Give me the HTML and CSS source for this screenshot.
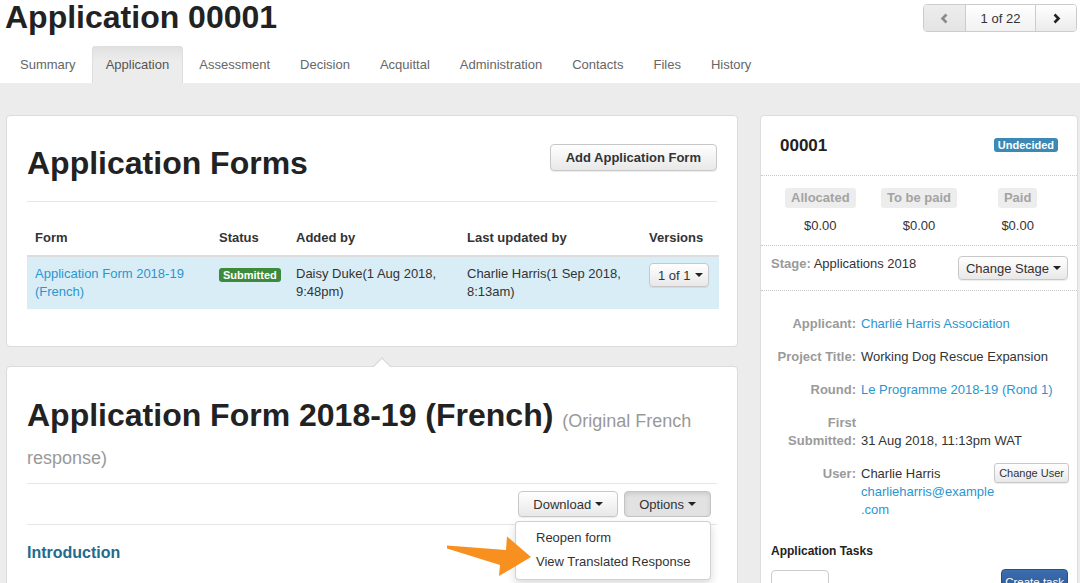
FILE: index.html
```html
<!DOCTYPE html>
<html lang="en">
<head>
<meta charset="utf-8">
<title>Application 00001</title>
<link rel="stylesheet" href="styles.css">
</head>
<body>
<header class="top">
  <div class="title-row">
    <h1 class="page-title">Application 00001</h1>
    <div class="pager">
      <span class="pg-btn pg-prev"><svg width="9" height="11" viewBox="0 0 9 11"><polyline points="6.5,1.5 2.5,5.5 6.5,9.5" fill="none" stroke="#8a8a8a" stroke-width="2.6"/></svg></span>
      <span class="pg-btn pg-mid">1 of 22</span>
      <span class="pg-btn pg-next"><svg width="9" height="11" viewBox="0 0 9 11"><polyline points="2.5,1.5 6.5,5.5 2.5,9.5" fill="none" stroke="#222" stroke-width="2.6"/></svg></span>
    </div>
  </div>
  <nav class="tabs">
    <a class="tab">Summary</a>
    <a class="tab active">Application</a>
    <a class="tab">Assessment</a>
    <a class="tab">Decision</a>
    <a class="tab">Acquittal</a>
    <a class="tab">Administration</a>
    <a class="tab">Contacts</a>
    <a class="tab">Files</a>
    <a class="tab">History</a>
  </nav>
</header>

<main class="main">
  <div class="col-left">
    <section class="card forms-card">
      <div class="card-head">
        <h2 class="big-title">Application Forms</h2>
        <button class="btn btn-bold">Add Application Form</button>
      </div>
      <table class="forms-table">
        <colgroup>
          <col class="w-form"><col class="w-status"><col class="w-added"><col class="w-updated"><col class="w-versions">
        </colgroup>
        <thead>
          <tr><th>Form</th><th>Status</th><th>Added by</th><th>Last updated by</th><th>Versions</th></tr>
        </thead>
        <tbody>
          <tr class="row-info">
            <td><a class="link">Application Form 2018-19 (French)</a></td>
            <td><span class="badge badge-green">Submitted</span></td>
            <td>Daisy Duke(1 Aug 2018, 9:48pm)</td>
            <td>Charlie Harris(1 Sep 2018, 8:13am)</td>
            <td><button class="btn btn-ver">1 of 1 <span class="caret"></span></button></td>
          </tr>
        </tbody>
      </table>
    </section>

    <section class="card form-card">
      <h2 class="big-title form-title">Application Form 2018-19 (French) <small class="sub">(Original French response)</small></h2>
      <div class="actions">
        <button class="btn">Download <span class="caret"></span></button>
        <div class="dropdown">
          <button class="btn btn-active">Options <span class="caret"></span></button>
          <ul class="menu">
            <li>Reopen form</li>
            <li>View Translated Response</li>
          </ul>
        </div>
      </div>
      <h3 class="section-title">Introduction</h3>
      <svg class="arrow" width="100" height="50" viewBox="440 530 100 50">
        <polygon points="447,545.5 506,550 507,536.5 531,557 499,576 500,565 447,548.5" fill="#f7901e"/>
      </svg>
    </section>
  </div>

  <aside class="card side">
    <div class="side-head">
      <span class="app-no">00001</span>
      <span class="badge badge-blue">Undecided</span>
    </div>
    <div class="stats">
      <div class="stat"><span class="stat-label">Allocated</span><span class="stat-val">$0.00</span></div>
      <div class="stat"><span class="stat-label">To be paid</span><span class="stat-val">$0.00</span></div>
      <div class="stat"><span class="stat-label">Paid</span><span class="stat-val">$0.00</span></div>
    </div>
    <div class="stage">
      <div class="stage-text"><span class="muted-b">Stage:</span> Applications 2018</div>
      <button class="btn btn-sm">Change Stage <span class="caret"></span></button>
    </div>
    <dl class="details">
      <div class="drow"><dt>Applicant:</dt><dd><a class="link">Charlié Harris Association</a></dd></div>
      <div class="drow"><dt>Project Title:</dt><dd>Working Dog Rescue Expansion</dd></div>
      <div class="drow"><dt>Round:</dt><dd><a class="link">Le Programme 2018-19 (Rond 1)</a></dd></div>
      <div class="drow drow-low"><dt>First Submitted:</dt><dd>31 Aug 2018, 11:13pm WAT</dd></div>
      <div class="drow"><dt>User:</dt>
        <dd class="user-dd">
          <div class="user-text">Charlie Harris<br><a class="link">charlieharris@example<wbr>.com</a></div>
          <button class="btn btn-xs">Change User</button>
        </dd>
      </div>
    </dl>
    <h4 class="tasks-title">Application Tasks</h4>
    <div class="tasks-row">
      <span class="task-input"></span>
      <button class="btn btn-primary">Create task</button>
    </div>
  </aside>
</main>
</body>
</html>
```

FILE: styles.css
```css
* { box-sizing: border-box; }

body {
  margin: 0;
  font-family: "Liberation Sans", Arial, sans-serif;
  font-size: 13px;
  color: #333;
  background: #ececec;
  overflow: hidden;
}

/* ---------- header ---------- */
.top {
  background: #fff;
}
.title-row {
  height: 46px;
  display: flex;
  justify-content: space-between;
  align-items: flex-start;
}
.page-title {
  margin: 0;
  padding-left: 5px;
  font-size: 32px;
  line-height: 35px;
  font-weight: bold;
  color: #222;
}
.pager {
  margin: 4px 3px 0 0;
  display: flex;
  height: 28px;
  border: 1px solid #ccc;
  border-radius: 4px;
  overflow: hidden;
}
.pg-btn {
  display: flex;
  align-items: center;
  justify-content: center;
  height: 100%;
}
.pg-prev {
  width: 42px;
  background: linear-gradient(#ededed, #e4e4e4);
  border-right: 1px solid #ccc;
}
.pg-mid {
  width: 70px;
  background: linear-gradient(#fff, #f1f1f1);
  border-right: 1px solid #ccc;
  color: #333;
}
.pg-next {
  width: 40px;
  background: linear-gradient(#fff, #ebebeb);
}

.tabs {
  display: flex;
  height: 37px;
  padding-left: 6px;
}
.tab {
  display: block;
  padding: 0 14px;
  margin-right: 2px;
  line-height: 37px;
  color: #666;
  border-radius: 4px 4px 0 0;
}
.tab.active {
  color: #555;
  background: linear-gradient(#e0e0e0, #ececec 40%);
  box-shadow: inset 1px 1px 0 #dedede, inset -1px 0 0 #dedede;
}

/* ---------- layout ---------- */
.main {
  display: flex;
  gap: 22px;
  padding: 32px 2px 0 6px;
  align-items: flex-start;
}
.col-left {
  width: 732px;
  display: flex;
  flex-direction: column;
  gap: 19px;
}
.card {
  background: #fff;
  border: 1px solid #dcdcdc;
  border-radius: 4px;
}

/* ---------- buttons ---------- */
.btn {
  font-family: "Liberation Sans", Arial, sans-serif;
  font-size: 13px;
  color: #333;
  height: 26px;
  padding: 0 14px;
  display: inline-flex;
  align-items: center;
  background: linear-gradient(#fff, #e8e8e8);
  border: 1px solid #c8c8c8;
  border-radius: 4px;
  box-shadow: 0 1px 1px rgba(0,0,0,.075);
  white-space: nowrap;
  cursor: pointer;
}
.btn-bold { font-weight: bold; height: 27px; padding: 0 15px; }
.btn-active {
  background: #e2e2e2;
  box-shadow: inset 0 2px 4px rgba(0,0,0,.1);
  border-color: #c4c4c4;
}
.btn-ver { height: 24px; padding: 0 5px 0 8px; }
.btn-sm { height: 24px; padding: 0 6px 0 7px; }
.btn-xs { height: 20px; padding: 0 4px; font-size: 11px; border-radius: 3px; }
.btn-primary {
  color: #fff;
  font-size: 11.5px;
  height: 26px;
  padding: 0 3px;
  background: linear-gradient(#3b6eb0, #2a5591);
  border-color: #284f86;
}
.caret {
  display: inline-block;
  width: 0;
  height: 0;
  margin-left: 4px;
  border-top: 4px solid #222;
  border-left: 4px solid transparent;
  border-right: 4px solid transparent;
}

.link { color: #2a96cf; text-decoration: none; }

.badge {
  display: inline-block;
  font-size: 11px;
  font-weight: bold;
  color: #fff;
  line-height: 14px;
  padding: 0 4px;
  border-radius: 3px;
}
.badge-green { background: #3d8a3d; }
.badge-blue { background: #3b89b4; }

/* ---------- forms card ---------- */
.forms-card { padding: 29px 20px 37px; }
.card-head {
  display: flex;
  justify-content: space-between;
  align-items: flex-start;
  padding-bottom: 19px;
  border-bottom: 1px solid #e6e6e6;
}
.big-title {
  margin: 0;
  font-size: 32px;
  line-height: 37px;
  font-weight: bold;
  color: #222;
}
.card-head .btn { margin-top: -1px; }

.forms-table {
  margin-top: 19px;
  width: 100%;
  border-collapse: collapse;
  table-layout: fixed;
}
.w-form { width: 184px; }
.w-status { width: 77px; }
.w-added { width: 171px; }
.w-updated { width: 182px; }
.w-versions { width: 78px; }
.forms-table th {
  text-align: left;
  font-weight: bold;
  padding: 8px;
  line-height: 18px;
  border-bottom: 2px solid #ddd;
  color: #333;
}
.forms-table td {
  padding: 8px;
  line-height: 18px;
  vertical-align: top;
}
.forms-table td .badge { margin-top: 3px; }
.forms-table td .btn-ver { margin-top: -2px; }
.row-info td { background: #d9edf7; }

/* ---------- form card ---------- */
.form-card {
  position: relative;
  padding: 30px 20px 200px;
}
.form-card::before,
.form-card::after {
  content: "";
  position: absolute;
  width: 0;
  height: 0;
}
.form-card::before {
  top: -10px;
  left: 366px;
  border-bottom: 9px solid #dcdcdc;
  border-left: 9px solid transparent;
  border-right: 9px solid transparent;
}
.form-card::after {
  top: -8px;
  left: 367px;
  border-bottom: 8px solid #fff;
  border-left: 8px solid transparent;
  border-right: 8px solid transparent;
}
.form-title {
  padding-bottom: 12px;
  border-bottom: 1px solid #e6e6e6;
}
.sub {
  font-size: 18px;
  line-height: 1;
  font-weight: normal;
  color: #999;
  position: relative;
  top: 1px;
}
.actions {
  display: flex;
  justify-content: flex-end;
  gap: 6px;
  padding: 7px 6px 7px 0;
  border-bottom: 1px solid #e6e6e6;
}
.dropdown { position: relative; }
.menu {
  position: absolute;
  top: 30px;
  right: 0;
  width: 196px;
  margin: 0;
  padding: 4px 0 5px;
  list-style: none;
  background: #fff;
  border: 1px solid rgba(0,0,0,.18);
  border-radius: 4px;
  box-shadow: 0 4px 10px rgba(0,0,0,.15);
  z-index: 2;
}
.menu li {
  padding: 3px 20px;
  line-height: 18px;
  color: #333;
  white-space: nowrap;
}
.section-title {
  margin: 18px 0 0;
  font-size: 16px;
  line-height: 20px;
  font-weight: bold;
  color: #226b8d;
}
.arrow {
  position: absolute;
  left: 433px;
  top: 163px;
  z-index: 3;
}

/* ---------- sidebar ---------- */
.side {
  width: 318px;
  padding-bottom: 40px;
}
.side-head {
  height: 60px;
  display: flex;
  justify-content: space-between;
  align-items: center;
  padding: 0 19px 0 19px;
  border-bottom: 1px dotted #c8c8c8;
}
.app-no {
  font-size: 17px;
  font-weight: bold;
  color: #222;
}
.side-head .badge { margin-top: -2px; }
.stats {
  display: grid;
  grid-template-columns: 1fr 1fr 1fr;
  padding: 12px 10px 10px;
  border-bottom: 1px dotted #c8c8c8;
}
.stat {
  display: flex;
  flex-direction: column;
  align-items: center;
}
.stat-label {
  height: 20px;
  line-height: 20px;
  padding: 0 6px;
  background: #ededed;
  border-radius: 3px;
  font-weight: bold;
  color: #a3a3a3;
  margin-bottom: 9px;
}
.stat-val { line-height: 18px; }
.stage {
  display: flex;
  justify-content: space-between;
  align-items: flex-start;
  padding: 10px 9px 10px 10px;
  border-bottom: 1px dotted #c8c8c8;
}
.stage-text { line-height: 18px; margin-top: -1px; }
.muted-b { font-weight: bold; color: #9a9a9a; }

.details {
  margin: 0;
  padding: 24px 9px 0 10px;
}
.drow {
  display: grid;
  grid-template-columns: 85px 1fr;
  column-gap: 5px;
  margin-bottom: 15px;
  line-height: 18px;
}
.drow dt {
  text-align: right;
  font-weight: bold;
  color: #9a9a9a;
}
.drow dd { margin: 0; }
.drow-low dd { align-self: end; }
.user-dd {
  display: flex;
  justify-content: space-between;
  align-items: flex-start;
}
.user-text { flex: 1; min-width: 0; }
.user-dd .btn { flex: none; margin-top: -2px; }

.tasks-title {
  margin: 23px 10px 0;
  font-size: 12px;
  line-height: 18px;
  font-weight: bold;
  color: #222;
}
.tasks-row {
  display: flex;
  justify-content: space-between;
  align-items: flex-start;
  padding: 9px 9px 0 10px;
}
.task-input {
  display: block;
  width: 58px;
  height: 28px;
  margin-top: 1px;
  border: 1px solid #ccc;
  border-radius: 4px;
  background: #fff;
}
```
